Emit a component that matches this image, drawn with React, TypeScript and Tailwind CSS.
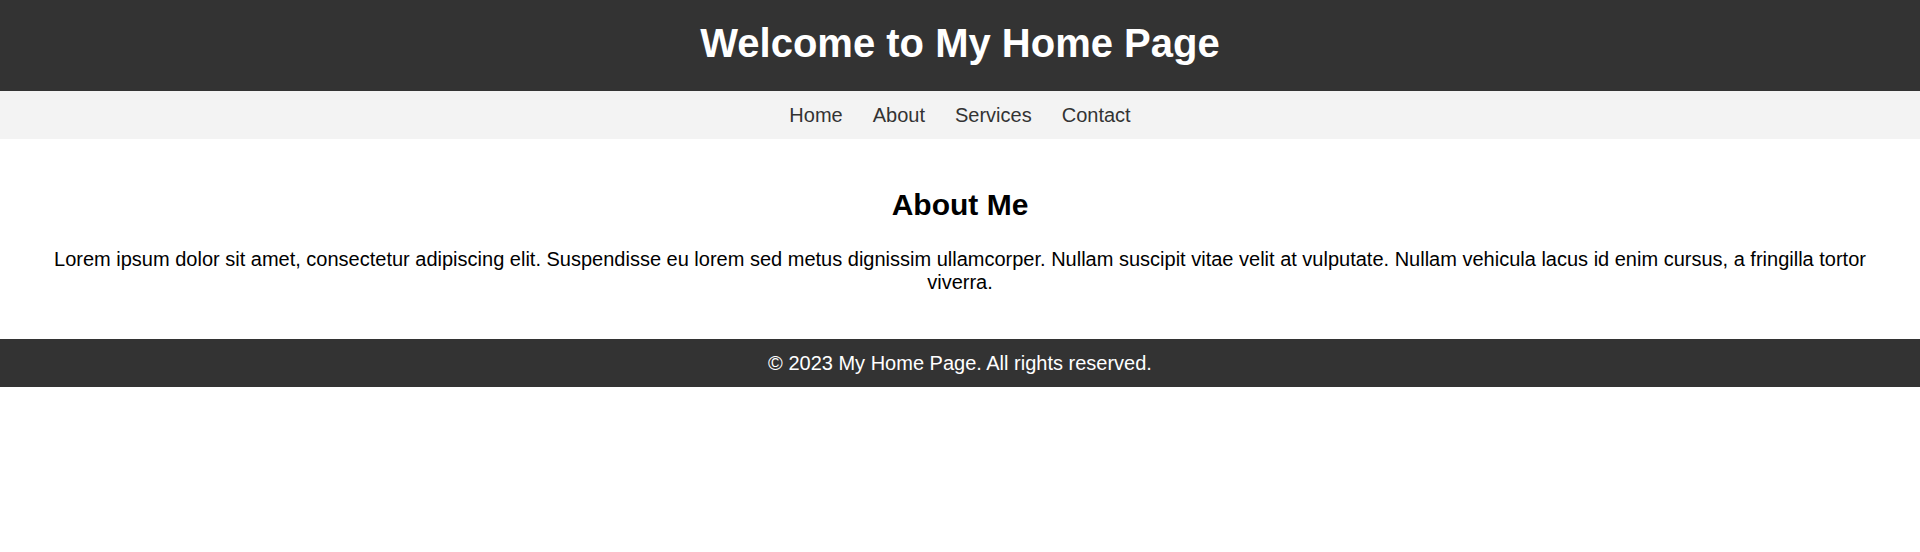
export default function App() {
  const links = ['Home', 'About', 'Services', 'Contact']

  return (
    <div className="bg-white text-black font-['Liberation_Sans',Arial,sans-serif]">
      <header className="bg-[#333333] text-white text-center pt-[20px] pb-[25px]">
        <h1 className="text-[40px] leading-[46px] font-bold">Welcome to My Home Page</h1>
      </header>

      <nav className="bg-[#f3f3f3] pt-[13px] pb-[12px]">
        <ul className="flex justify-center gap-[30px] text-[20px] leading-[23px] text-[#333333]">
          {links.map((l) => (
            <li key={l}>
              <a href="#">{l}</a>
            </li>
          ))}
        </ul>
      </nav>

      <section className="px-[25px] pt-[24px] pb-[25px] text-center">
        <h2 className="text-[30px] leading-[34.5px] font-bold mt-[25px] mb-[25px]">About Me</h2>
        <p className="text-[20px] leading-[23px] mb-[20px]">
          Lorem ipsum dolor sit amet, consectetur adipiscing elit. Suspendisse eu lorem sed metus dignissim ullamcorper. Nullam suscipit vitae velit at vulputate. Nullam vehicula lacus id enim cursus, a fringilla tortor viverra.
        </p>
      </section>

      <footer className="bg-[#333333] text-white text-center text-[20px] leading-[23px] pt-[13px] pb-[12px]">
        © 2023 My Home Page. All rights reserved.
      </footer>
    </div>
  )
}
